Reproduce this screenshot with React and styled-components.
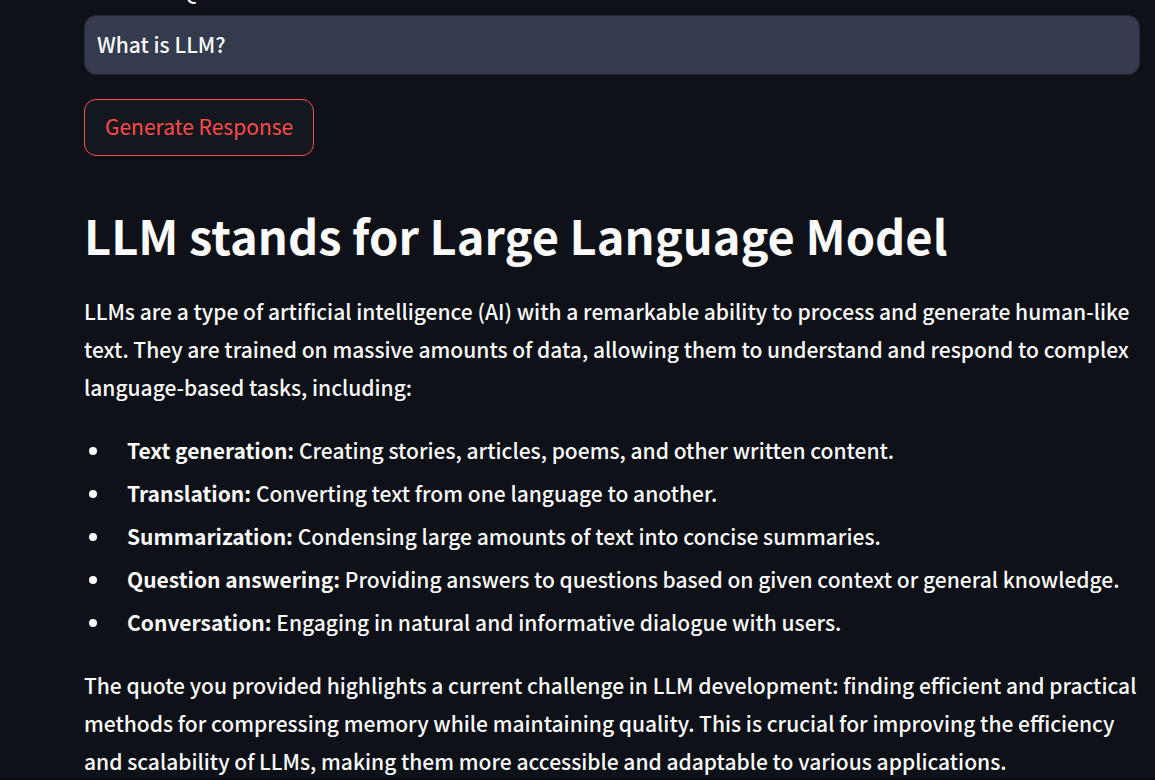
import React from "react";
import styled, { createGlobalStyle } from "styled-components";

const GlobalStyle = createGlobalStyle`
  *, *::before, *::after { box-sizing: border-box; }
  html { background: #0e1117; }
  body {
    margin: 0;
    overflow: hidden;
    background: #0e1117;
    color: #fafafa;
    font-family: "Noto Sans CJK SC", "Noto Sans", sans-serif;
    font-size: 21px;
    line-height: 38px;
  }
`;

const Page = styled.main`
  height: 100vh;
  overflow: hidden;
  padding: 0 15px 0 84px;
  border-bottom: 1px solid #08000f;
`;

const LabelClip = styled.div`
  display: flex;
  align-items: flex-end;
  height: 15px;
  overflow: hidden;
`;

const Label = styled.label`
  line-height: 24px;
  padding-bottom: 12px;
  font-weight: 500;
`;

const TextInput = styled.input`
  display: block;
  width: 100%;
  height: 60px;
  padding: 0 12px 2px;
  border: 1px solid #262730;
  border-radius: 12px;
  outline: none;
  background: #343b4e;
  color: #fafafa;
  font: inherit;
  font-weight: 500;
`;

const Button = styled.button`
  display: block;
  margin: 24px 0 0;
  height: 57px;
  padding: 0 20px 4px;
  border: 1px solid #ff4b4b;
  border-radius: 12px;
  background: #13171e;
  color: #ff4b4b;
  font: inherit;
`;

const Title = styled.h1`
  margin: 47px 0 25px;
  font-size: 47px;
  line-height: 64px;
  font-weight: 700;
`;

const Paragraph = styled.p`
  margin: 0 0 25px;
  font-weight: 500;
`;

const List = styled.ul`
  margin: 0 0 25px;
  padding: 0;
  list-style: none;
`;

const Item = styled.li`
  display: flex;
  align-items: center;
  padding-left: 5px;
  margin-bottom: 5px;
  font-weight: 500;

  &::before {
    content: "";
    width: 8px;
    height: 8px;
    margin: 2px 30px 0 0;
    border-radius: 50%;
    background: #fafafa;
  }
`;

const Term = styled.strong`
  font-weight: 700;
`;

const items = [
  ["Text generation:", "Creating stories, articles, poems, and other written content."],
  ["Translation:", "Converting text from one language to another."],
  ["Summarization:", "Condensing large amounts of text into concise summaries."],
  ["Question answering:", "Providing answers to questions based on given context or general knowledge."],
  ["Conversation:", "Engaging in natural and informative dialogue with users."],
];

export default function App() {
  return (
    <>
      <GlobalStyle />
      <Page>
        <LabelClip>
          <Label htmlFor="question">Enter the Question</Label>
        </LabelClip>
        <TextInput id="question" type="text" defaultValue="What is LLM?" />
        <Button type="button">Generate Response</Button>
        <Title>LLM stands for Large Language Model</Title>
        <Paragraph>
          LLMs are a type of artificial intelligence (AI) with a remarkable ability to process and generate human-like
          text. They are trained on massive amounts of data, allowing them to understand and respond to complex
          language-based tasks, including:
        </Paragraph>
        <List>
          {items.map(([name, text]) => (
            <Item key={name}>
              <span>
                <Term>{name}</Term> {text}
              </span>
            </Item>
          ))}
        </List>
        <Paragraph>
          The quote you provided highlights a current challenge in LLM development: finding efficient and practical
          methods for compressing memory while maintaining quality. This is crucial for improving the efficiency
          and scalability of LLMs, making them more accessible and adaptable to various applications.
        </Paragraph>
      </Page>
    </>
  );
}
